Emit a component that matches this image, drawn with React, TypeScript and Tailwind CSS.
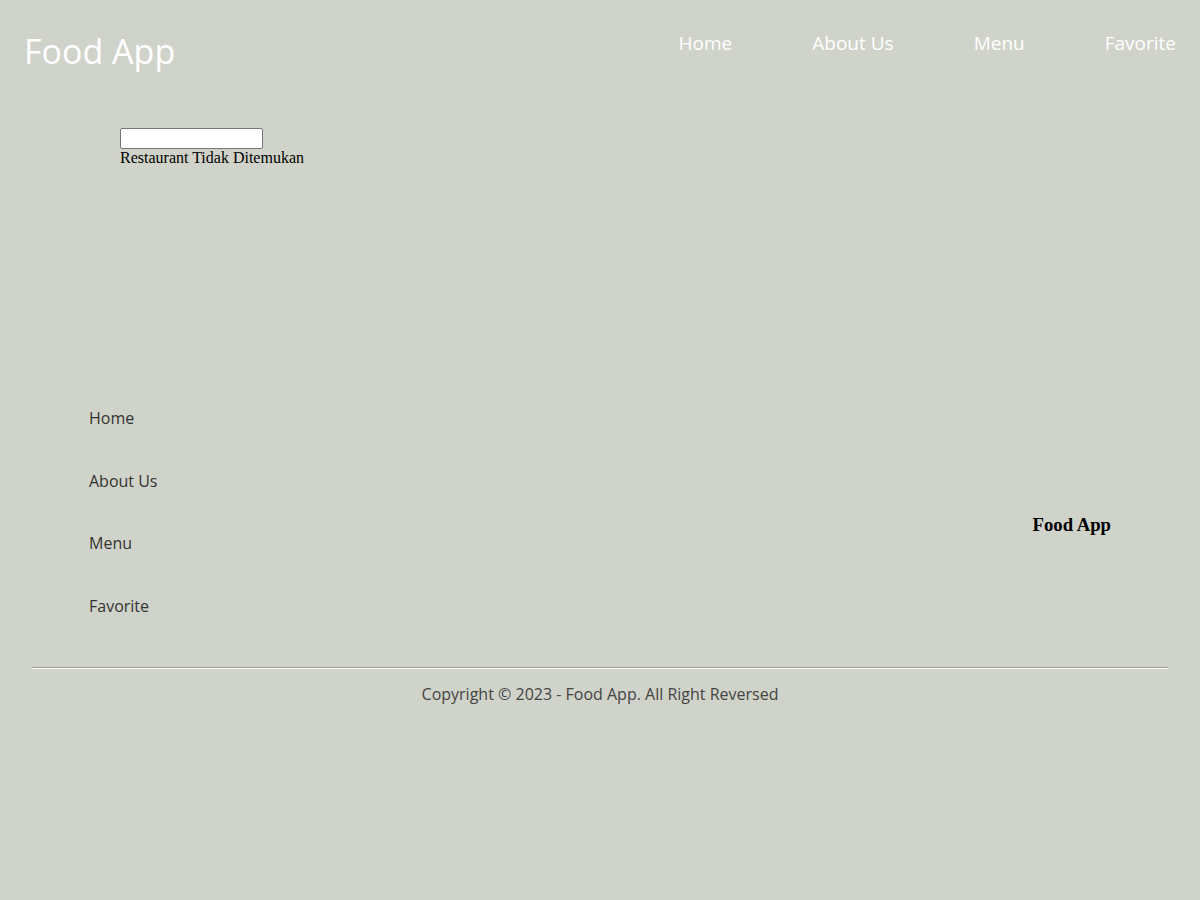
const navLinks = ['Home', 'About Us', 'Menu', 'Favorite'];

export default function App() {
    return (
        <div className="min-h-[900px] bg-[#d0d3c9]" style={{ fontFamily: '"Open Sans", Lato, sans-serif' }}>
            <header className="flex justify-between items-start px-6 h-[104px]">
                <h1 className="text-[34px] leading-none text-white mt-[34px]">Food App</h1>
                <nav className="flex gap-20 mt-[32px]">
                    {navLinks.map((link) => (
                        <a key={link} href="#" className="text-[19px] leading-[22px] text-white">
                            {link}
                        </a>
                    ))}
                </nav>
            </header>

            <main className="pl-[120px] pt-6 h-[290px]" style={{ fontFamily: '"Liberation Serif", serif' }}>
                <input type="text" className="block w-[143px] h-[21px] bg-white border border-[#767676] rounded-[2px]" />
                <p className="text-base leading-[18px] text-black">Restaurant Tidak Ditemukan</p>
            </main>

            <footer className="px-8">
                <div className="flex justify-between">
                    <ul className="pl-[57px] pt-[12px]">
                        {navLinks.map((link) => (
                            <li key={link} className="h-[62.5px]">
                                <a href="#" className="text-base leading-5 text-[#333]">{link}</a>
                            </li>
                        ))}
                    </ul>
                    <h3
                        className="text-[18.72px] font-bold text-black pt-[117px] pr-[57px]"
                        style={{ fontFamily: '"Liberation Serif", serif' }}
                    >
                        Food App
                    </h3>
                </div>
                <hr className="border-0 border-t border-t-[#9a9c96] border-b border-b-white mt-[11px]" />
                <p className="text-center text-base text-[#444] mt-[13px]">Copyright © 2023 - Food App. All Right Reversed</p>
            </footer>
        </div>
    );
}
